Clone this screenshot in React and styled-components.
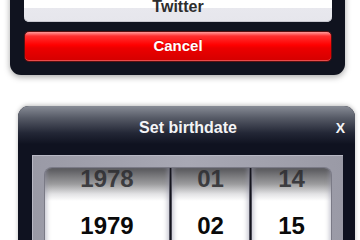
import React from "react";
import styled, { createGlobalStyle } from "styled-components";

const GlobalStyle = createGlobalStyle`
  html, body {
    margin: 0;
    padding: 0;
    background: #fff;
    font-family: "Liberation Sans", Arial, sans-serif;
    overflow: hidden;
  }
`;

const columns = [
  { key: "year", width: 124, values: ["1978", "1979", "1980"] },
  { key: "month", width: 77, values: ["01", "02", "03"] },
  { key: "day", width: 79, values: ["14", "15", "16"] },
];

function App() {
  return (
    <Page>
      <GlobalStyle />
      {/* share sheet, cut off at the top */}
      <Sheet>
        <SheetButton>Twitter</SheetButton>
        <CancelButton>Cancel</CancelButton>
      </Sheet>

      <Dialog>
        <Header>
          <Title>Set birthdate</Title>
          <Close>X</Close>
        </Header>
        <Frame>
          <Picker>
            {columns.map((col, i) => (
              <React.Fragment key={col.key}>
                {i > 0 && <Divider />}
                <Column $width={col.width}>
                  {col.values.map((v, j) => (
                    <Row key={v} $selected={j === 1}>
                      {v}
                    </Row>
                  ))}
                </Column>
              </React.Fragment>
            ))}
          </Picker>
        </Frame>
      </Dialog>
    </Page>
  );
}

const Page = styled.div`
  width: 360px;
  height: 240px;
  overflow: hidden;
`;

const Sheet = styled.div`
  margin: -20px 0 0 10px;
  width: 335px;
  box-sizing: border-box;
  padding: 8px 13px 13px 14px;
  background: #10131f;
  border-radius: 0 0 11px 11px;
  box-shadow: 0 2px 6px rgba(0, 0, 0, 0.35);
  display: flex;
  flex-direction: column;
  gap: 9px;
`;

const SheetButton = styled.div`
  height: 34px;
  padding-top: 10px;
  box-sizing: border-box;
  border-radius: 5px;
  background: linear-gradient(#ffffff 0%, #ffffff 59%, #e8e8ee 59%, #e6e6ec 100%);
  box-shadow: inset 0 -1px 0 #c8c8d0;
  color: #2e2e2e;
  font-size: 16px;
  font-weight: bold;
  text-align: center;
  line-height: 18px;
`;

const CancelButton = styled.div`
  height: 31px;
  box-sizing: border-box;
  border-radius: 5px;
  border: 1px solid #5a1010;
  background: linear-gradient(
    #ff9c9c 0%,
    #ff3030 14%,
    #ff0000 45%,
    #ec0000 55%,
    #d40000 100%
  );
  box-shadow: inset 0 -1px 0 rgba(255, 150, 150, 0.5);
  color: #fff;
  font-size: 15px;
  font-weight: bold;
  text-align: center;
  line-height: 27px;
  text-shadow: 0 -1px 0 rgba(120, 0, 0, 0.4);
`;

const Dialog = styled.div`
  margin: 31px 0 0 18px;
  width: 337px;
  height: 160px;
  background: #0f1220;
  border-radius: 11px 11px 0 0;
  box-shadow: 0 -1px 4px rgba(0, 0, 0, 0.25);
  display: flex;
  flex-direction: column;
  overflow: hidden;
`;

const Header = styled.div`
  position: relative;
  height: 49px;
  flex: none;
  display: flex;
  align-items: center;
  justify-content: center;
  background: linear-gradient(#888c96 0%, #555965 25%, #232736 55%, #0f1220 78%);
  padding-bottom: 6px;
  box-sizing: border-box;
`;

const Title = styled.div`
  color: #f4f4f6;
  font-size: 16px;
  font-weight: bold;
  margin-left: 3px;
`;

const Close = styled.div`
  position: absolute;
  right: 10px;
  top: 14px;
  color: #f4f4f6;
  font-size: 14px;
  font-weight: bold;
`;

const Frame = styled.div`
  margin: 0 12px 0 14px;
  flex: 1;
  padding: 13px 12px 0 13px;
  background: linear-gradient(90deg, #9a9aa6 0%, #a8a8b4 50%, #9a9aa6 100%);
  box-shadow: inset 1px 1px 0 #b8b8c4;
  display: flex;
`;

const Picker = styled.div`
  flex: 1;
  display: flex;
  border-radius: 7px 7px 0 0;
  overflow: hidden;
  box-shadow: 0 0 0 1px #7a7a86;
`;

const Divider = styled.div`
  width: 3px;
  flex: none;
  background: linear-gradient(90deg, #9090a0 0%, #14141c 35%, #14141c 70%, #9090a0 100%);
`;

const Column = styled.div`
  position: relative;
  width: ${(p) => p.$width}px;
  flex: none;
  overflow: hidden;
  background: linear-gradient(#56565a 0px, #9c9c9e 16px, #e2e2e4 26px, #ffffff 33px);
  &::after {
    content: "";
    position: absolute;
    inset: 0;
    box-shadow: inset 4px 0 4px -2px rgba(150, 150, 170, 0.5),
      inset -4px 0 4px -2px rgba(150, 150, 170, 0.5);
    pointer-events: none;
  }
`;

const Row = styled.div`
  height: 47px;
  display: flex;
  align-items: center;
  justify-content: center;
  font-size: 24px;
  font-weight: bold;
  color: ${(p) => (p.$selected ? "#0a0a0a" : "#2c2c30")};
  opacity: ${(p) => (p.$selected ? 1 : 0.85)};
  &:first-child {
    margin-top: -13px;
  }
`;

export default App;
